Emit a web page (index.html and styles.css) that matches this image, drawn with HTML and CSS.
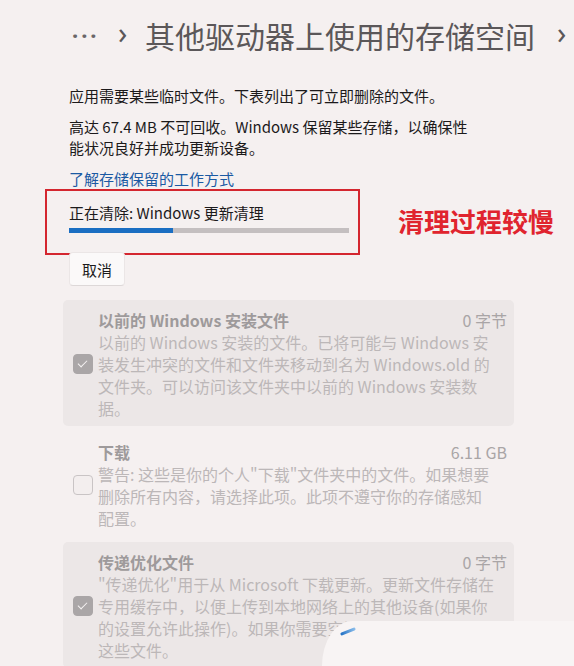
FILE: index.html
```html
<!DOCTYPE html>
<html lang="zh-CN">
<head>
    <meta charset="UTF-8">
    <title>其他驱动器上使用的存储空间</title>
    <link rel="stylesheet" href="styles.css">
</head>
<body>

    <!-- Breadcrumb -->
    <div class="crumbs">
        <span class="dots">&middot;&middot;&middot;</span>
        <span class="chev">›</span>
        <h1 class="title">其他驱动器上使用的存储空间</h1>
        <span class="chev">›</span>
    </div>

    <div class="page">
        <p class="intro">应用需要某些临时文件。下表列出了可立即删除的文件。</p>
        <p class="intro">高达 67.4 MB 不可回收。Windows 保留某些存储，以确保性<br>能状况良好并成功更新设备。</p>
        <a class="link" href="#">了解存储保留的工作方式</a>

        <div class="status-row">
            <div class="status-box">
                <div class="status-text">正在清除: Windows 更新清理</div>
                <div class="progress"><div class="progress-fill" style="width: 37%"></div></div>
            </div>
            <div class="note">清理过程较慢</div>
        </div>

        <button class="btn">取消</button>

        <div class="item shaded">
            <span class="check on"></span>
            <div class="item-body">
                <div class="item-head"><b>以前的 Windows 安装文件</b><span>0 字节</span></div>
                <div class="item-desc">以前的 Windows 安装的文件。已将可能与 Windows 安<br>装发生冲突的文件和文件夹移动到名为 Windows.old 的<br>文件夹。可以访问该文件夹中以前的 Windows 安装数<br>据。</div>
            </div>
        </div>

        <div class="item">
            <span class="check"></span>
            <div class="item-body">
                <div class="item-head"><b>下载</b><span>6.11 GB</span></div>
                <div class="item-desc">警告: 这些是你的个人"下载"文件夹中的文件。如果想要<br>删除所有内容，请选择此项。此项不遵守你的存储感知<br>配置。</div>
            </div>
        </div>

        <div class="item shaded">
            <span class="check on"></span>
            <div class="item-body">
                <div class="item-head"><b>传递优化文件</b><span>0 字节</span></div>
                <div class="item-desc">"传递优化"用于从 Microsoft 下载更新。更新文件存储在<br>专用缓存中，以便上传到本地网络上的其他设备(如果你<br>的设置允许此操作)。如果你需要空间，可以删除<br>这些文件。</div>
            </div>
        </div>
    </div>

    <div class="blot"></div>

</body>
</html>
```

FILE: styles.css
```css
/* General */
body {
    margin: 0;
    background: #f5f0f0;
    font-family: "Noto Sans CJK SC", "Noto Sans", sans-serif;
    color: #1c1a1b;
    width: 574px;
    height: 666px;
    overflow: hidden;
    position: relative;
}

/* Breadcrumb */
.crumbs {
    display: flex;
    align-items: center;
    padding: 12px 0 0 72px;
    height: 46px;
    color: #5b5759;
}

.dots {
    flex-shrink: 0;
    font-family: "Noto Sans", sans-serif;
    font-size: 22px;
    font-weight: 700;
    letter-spacing: 3px;
    width: 46px;
    color: #6a6668;
}

.chev {
    flex-shrink: 0;
    font-family: "Noto Sans", sans-serif;
    font-size: 30px;
    width: 26px;
    line-height: 1;
    margin-top: -4px;
}

.title {
    flex-shrink: 0;
    font-size: 30px;
    font-weight: 400;
    margin: 0 22px 0 1px;
    white-space: nowrap;
    line-height: 46px;
}

/* Content */
.page {
    padding: 27px 0 0 63px;
    width: 451px;
}

.intro {
    font-size: 15px;
    line-height: 21px;
    margin: 0 0 10px 6px;
}

.link {
    display: block;
    margin: 0 0 0 6px;
    font-size: 15px;
    line-height: 21px;
    color: #1b5aa3;
    text-decoration: none;
}

.status-row {
    display: flex;
    align-items: center;
    margin-left: -18px;
}

.status-box {
    flex-shrink: 0;
    border: 2px solid #d4262f;
    width: 289px;
    height: 62px;
    padding: 0 0 0 22px;
}

.status-text {
    font-size: 15px;
    line-height: 21px;
    margin-top: 11px;
}

.progress {
    width: 280px;
    height: 5px;
    background: #c4bfc0;
    margin-top: 5px;
}

.progress-fill {
    height: 100%;
    background: #1a6ec2;
}

.note {
    flex-shrink: 0;
    color: #e0242e;
    font-size: 26px;
    font-weight: 700;
    margin-left: 38px;
    margin-top: -4px;
    white-space: nowrap;
}

.btn {
    margin: -3px 0 14px 6px;
    font: inherit;
    font-size: 15px;
    padding: 4px 12px;
    height: 34px;
    background: #fbf9f9;
    border: 1px solid #ebe6e6;
    border-bottom-color: #ddd8d8;
    border-radius: 4px;
    color: #1c1a1b;
}

/* Items */
.item {
    display: flex;
    align-items: center;
    padding: 9px 7px 7px 10px;
    border-radius: 5px;
    margin-bottom: 6px;
}

.item.shaded {
    background: #ece7e7;
}

.check {
    width: 18px;
    height: 18px;
    border: 1px solid #c9c4c5;
    border-radius: 4px;
    background: #f3eeee;
    flex-shrink: 0;
    margin-right: 5px;
    position: relative;
}

.check.on {
    background: #aaa6a7;
    border-color: #aaa6a7;
}

.check.on::after {
    content: "";
    position: absolute;
    left: 6px;
    top: 3px;
    width: 4px;
    height: 8px;
    border: solid #f6f3f3;
    border-width: 0 1.5px 1.5px 0;
    transform: rotate(45deg);
}

.item-body {
    flex: 1;
}

.item-head {
    display: flex;
    justify-content: space-between;
    font-size: 16px;
    line-height: 22px;
    color: #9e9a9b;
}

.item-head span {
    color: #a9a5a6;
}

.item-desc {
    font-size: 16px;
    line-height: 22px;
    color: #bcb7b8;
    white-space: nowrap;
}

/* Watermark overlay */
.blot {
    position: absolute;
    left: 322px;
    top: 621px;
    width: 252px;
    height: 45px;
    border-top-left-radius: 30px 45px;
    background: #f8f4f4;
}

.blot::before {
    content: "";
    position: absolute;
    left: 18px;
    top: 9px;
    width: 16px;
    height: 3px;
    border-radius: 2px;
    background: linear-gradient(90deg, #1f6fc4, #8fc0ec);
    transform: rotate(-22deg);
}
```
